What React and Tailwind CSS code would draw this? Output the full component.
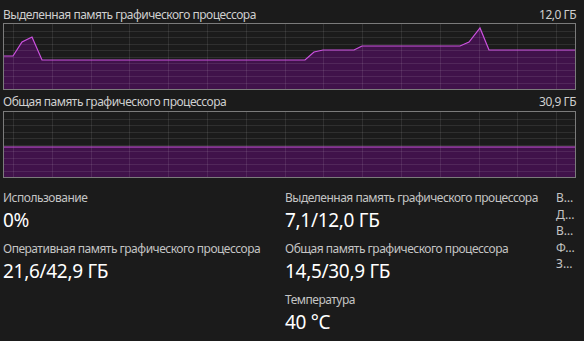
import React from "react";

const FONT = { fontFamily: "'Noto Sans', 'Open Sans', sans-serif" };

const W = 571;
const H = 65;
const vLines = Array.from({ length: 15 }, (_, k) => 9 + 38.8 * k);
const hLines = Array.from({ length: 9 }, (_, k) => 6.5 * (k + 1));

// points in page coords, shifted into graph interior (box at x=3, border 1px)
const dedicated = [
  [3, 56], [13, 56], [22, 42], [32, 37], [42, 60], [305, 60], [314, 52], [323, 50],
  [354, 50], [362, 46], [460, 46], [469, 42], [480, 28], [489, 50], [577, 50],
].map(([x, y]) => [x - 4, y - 24]);

const shared = [[-1, 35], [W + 1, 35]];

function Graph({ points }) {
  const line = points.map(([x, y]) => `${x},${y}`).join(" ");
  const area = `-1,${H + 1} ${line} ${W + 1},${H + 1}`;
  return (
    <div className="border border-[#7b7b7b] w-[573px] h-[67px]">
      <svg width={W} height={H} className="block">
        <polygon points={area} fill="#40124a" />
        {vLines.map((x) => (
          <line key={"v" + x} x1={Math.round(x) + 0.5} y1={0} x2={Math.round(x) + 0.5} y2={H} stroke="rgba(255,255,255,0.09)" strokeWidth="1" />
        ))}
        {hLines.map((y) => (
          <line key={"h" + y} x1={0} y1={Math.round(y) + 0.5} x2={W} y2={Math.round(y) + 0.5} stroke="rgba(255,255,255,0.09)" strokeWidth="1" />
        ))}
        <polyline points={line} fill="none" stroke="#cc52e0" strokeWidth="1.2" />
      </svg>
    </div>
  );
}

function Stat({ label, value }) {
  return (
    <div className="flex flex-col">
      <div className="text-[12px] leading-[16px] tracking-[-0.5px] text-[#c4c4c4] whitespace-nowrap">{label}</div>
      <div className="text-[19px] leading-[25px] tracking-[-0.3px] text-white mt-[2px] whitespace-nowrap">{value}</div>
    </div>
  );
}

export default function App() {
  return (
    <div className="w-[584px] h-[341px] bg-[#1b1b1b] overflow-hidden pl-[3px]" style={FONT}>
      <div className="w-[573px] pt-[7px]">
        <div className="flex justify-between text-[12px] leading-[16px] tracking-[-0.5px] text-[#cfcfcf]">
          <span>Выделенная память графического процессора</span>
          <span>12,0 ГБ</span>
        </div>
        <Graph points={dedicated} />
        <div className="flex justify-between text-[12px] leading-[16px] tracking-[-0.5px] text-[#cfcfcf] mt-[4px] mb-[1px]">
          <span>Общая память графического процессора</span>
          <span>30,9 ГБ</span>
        </div>
        <Graph points={shared} />
      </div>

      <div className="flex mt-[12px]">
        <div className="w-[282px] flex flex-col gap-[8px]">
          <Stat label="Использование" value="0%" />
          <Stat label="Оперативная память графического процессора" value="21,6/42,9 ГБ" />
        </div>
        <div className="w-[271px] flex flex-col gap-[8px]">
          <Stat label="Выделенная память графического процессора" value="7,1/12,0 ГБ" />
          <Stat label="Общая память графического процессора" value="14,5/30,9 ГБ" />
          <Stat label="Температура" value="40 °C" />
        </div>
        <div className="flex flex-col text-[12px] leading-[16.5px] text-[#c4c4c4]">
          <span>В…</span>
          <span>Д…</span>
          <span>В…</span>
          <span>Ф…</span>
          <span>З…</span>
        </div>
      </div>
    </div>
  );
}
